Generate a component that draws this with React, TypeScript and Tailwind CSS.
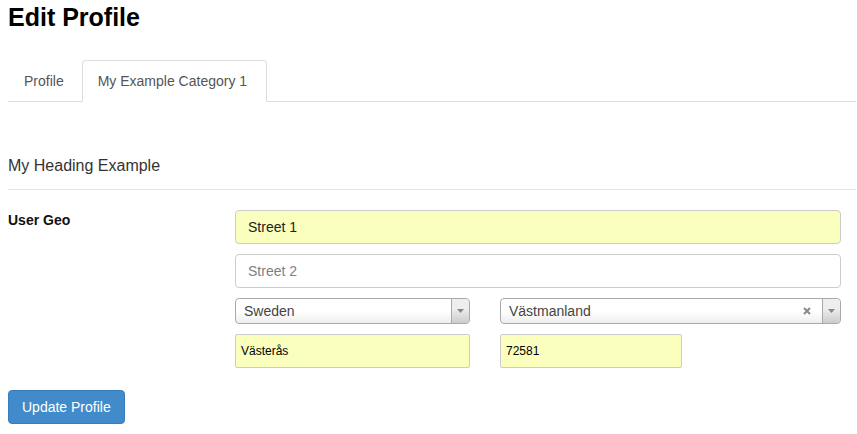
import React from "react";

function Select2({ value, clear, width }: { value: string; clear?: boolean; width: string }) {
  return (
    <div
      className={`${width} relative flex h-[26px] items-center rounded-[4px] border border-[#aaaaaa] bg-[linear-gradient(to_top,#eeeeee_0%,#ffffff_50%)] text-[14px] leading-[26px] text-[#444444]`}
    >
      <span className="flex-1 pl-[8px]">{value}</span>
      {clear && (
        <svg className="mr-[11px]" width="8" height="8" viewBox="0 0 8 8">
          <path d="M1 1 L7 7 M7 1 L1 7" stroke="#888888" strokeWidth="2" strokeLinecap="butt" />
        </svg>
      )}
      <span className="flex h-full w-[18px] items-center justify-center rounded-r-[4px] border-l border-[#aaaaaa] bg-[linear-gradient(to_top,#cccccc_0%,#eeeeee_60%)]">
        <svg width="7" height="4" viewBox="0 0 7 4">
          <path d="M0 0 L7 0 L3.5 4 Z" fill="#888888" />
        </svg>
      </span>
    </div>
  );
}

export default function App() {
  return (
    <div
      className="min-h-[434px] w-[857px] bg-white pl-[8px] pr-px text-[14px] text-[#333333]"
      style={{ fontFamily: '"Liberation Sans", Arial, sans-serif' }}
    >
      <h1 className="pt-[4px] text-[25px] font-bold leading-[26px] text-black">Edit Profile</h1>

      <ul className="mt-[30px] flex border-b border-[#dddddd]">
        <li className="-mb-px mr-[2px]">
          <span className="block rounded-t-[4px] border border-transparent px-[15px] py-[10px] leading-[20px] text-[#555555]">
            Profile
          </span>
        </li>
        <li className="-mb-px mr-[2px]">
          <span className="block rounded-t-[4px] border border-[#dddddd] border-b-transparent bg-white pl-[15px] pr-[19px] py-[10px] leading-[20px] text-[#555555]">
            My Example Category 1
          </span>
        </li>
      </ul>

      <div className="mt-[53px] border-b border-[#e5e5e5] pb-[12px] text-[16px] leading-[22px] text-[#333333]">
        My Heading Example
      </div>

      <div className="mt-[20px] flex">
        <div className="w-[227px] text-[14px] font-bold leading-[20px] text-[#111111]">User Geo</div>
        <div className="flex w-[606px] flex-col gap-[10px]">
          <div className="flex h-[34px] items-center rounded-[4px] border border-[#cccccc] bg-[#faffbd] px-[12px] text-[14px] text-[#222222]">
            Street 1
          </div>
          <div className="flex h-[34px] items-center rounded-[4px] border border-[#cccccc] bg-white px-[12px] text-[14px] text-[#808080]">
            Street 2
          </div>
          <div className="flex gap-[30px]">
            <Select2 value="Sweden" width="w-[235px]" />
            <Select2 value="Västmanland" clear width="w-[341px]" />
          </div>
          <div className="flex gap-[30px]">
            <div className="flex h-[34px] w-[235px] items-center rounded-[2px] border border-[#cccccc] bg-[#faffbd] px-[5px] text-[12px] text-black">
              Västerås
            </div>
            <div className="flex h-[34px] w-[182px] items-center rounded-[2px] border border-[#cccccc] bg-[#faffbd] px-[5px] text-[12px] text-black">
              72581
            </div>
          </div>
        </div>
      </div>

      <div className="mt-[22px]">
        <span className="inline-flex h-[34px] items-center rounded-[4px] border border-[#357ebd] bg-[#428bca] px-[13px] text-[14px] text-white">
          Update Profile
        </span>
      </div>
    </div>
  );
}
